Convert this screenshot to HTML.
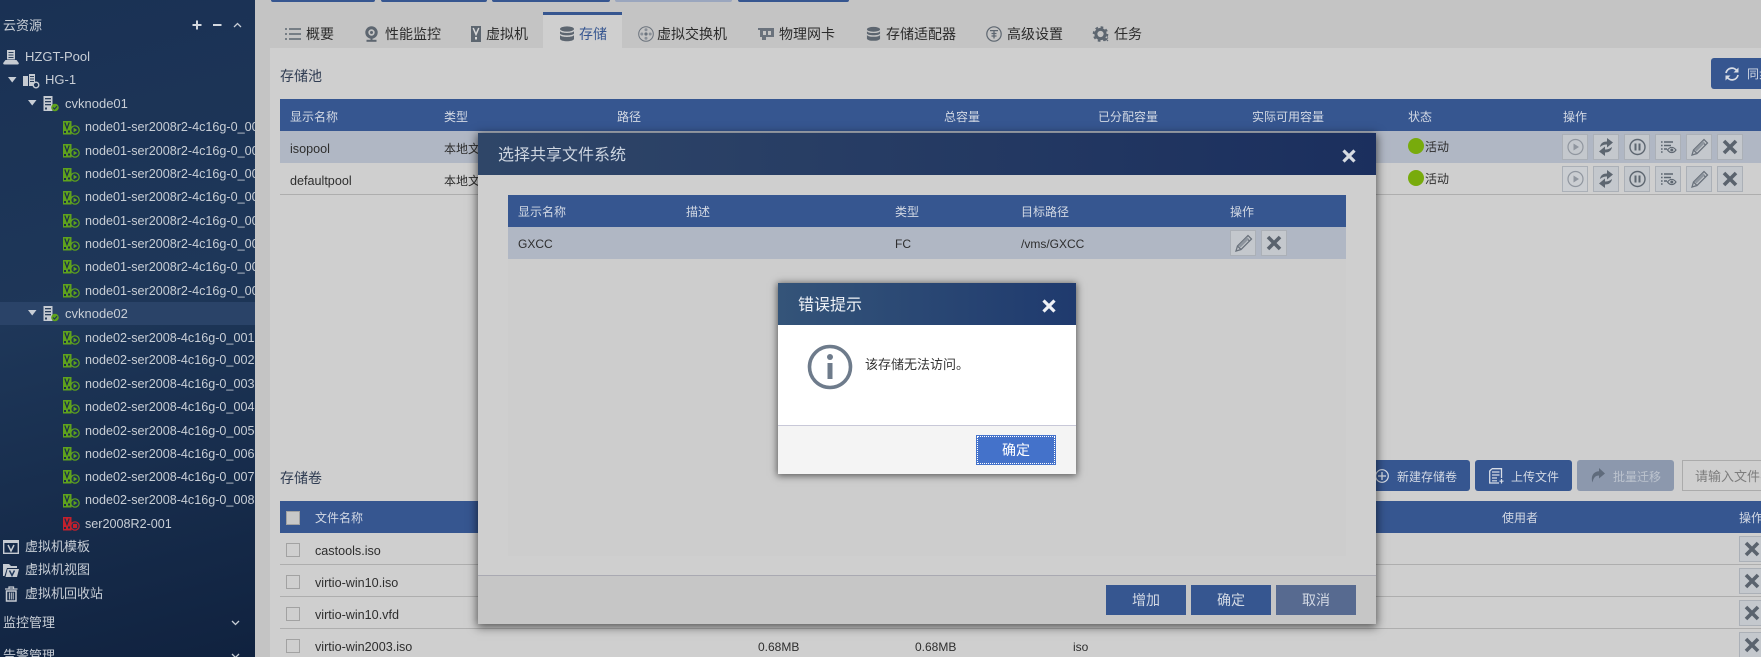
<!DOCTYPE html>
<html lang="zh">
<head>
<meta charset="utf-8">
<title>存储</title>
<style>
html,body{margin:0;padding:0;width:1761px;height:657px;overflow:hidden;background:#c4c4c4}
body{position:relative;font-family:"Liberation Sans","Noto Sans CJK SC",sans-serif;font-size:13px;color:#2e2e2e}
.a,.t{position:absolute}
.t{white-space:nowrap;line-height:20px;height:20px;margin-top:1px}
svg{position:absolute;overflow:visible}
#side{position:absolute;left:0;top:0;width:255px;height:657px;overflow:hidden;background:linear-gradient(165deg,#1a3154 0%,#1e3759 45%,#10223f 100%);color:#c8ced6}
#side .n{font-size:12.6px;left:85px}
.th{position:absolute;background:#365690}
.w{color:#d3d9e4;font-size:12px}
.top{position:absolute;top:0;height:2px;background:#365690;border-radius:0 0 3px 3px}
.tab{font-size:14px;top:24px;color:#2b2b2b;margin-top:0}
.b{position:absolute;width:26px;height:26px;box-sizing:border-box;border:1px solid #abb0b7;background:#c4c8cd}
.b svg{left:-1px;top:-1px}
.cb{position:absolute;width:14px;height:14px;box-sizing:border-box;border:1px solid #a2a2a2;background:#cfcfcf}
.line{position:absolute;height:1px;background:#aeaeae}
.btn{position:absolute;background:#365690;border-radius:3px}
.mb{position:absolute;top:585px;width:80px;height:30px;line-height:30px;text-align:center;font-size:14px;color:#d3d9e4;background:#365690}
.f{font-size:12.6px}
</style>
</head>
<body>
<svg width="0" height="0" style="position:absolute">
<defs>
<symbol id="vm" viewBox="0 0 17 14">
  <rect x="0" y="0" width="8.5" height="13.5" fill="#5fa31c"/>
  <path d="M1.8 1.5 L4 7.5 L6.2 1.5" fill="none" stroke="#1c2f4a" stroke-width="1.2"/>
  <rect x="1" y="10" width="2" height="2" fill="#1c2f4a"/><rect x="5" y="9.5" width="2" height="2" fill="#1c2f4a"/>
  <circle cx="12" cy="9" r="4.2" fill="#1c3354" stroke="#5fa31c" stroke-width="1.2"/>
  <path d="M10.6 6.8 L14.2 9 L10.6 11.2Z" fill="#5fa31c"/>
</symbol>
<symbol id="vmr" viewBox="0 0 17 14">
  <rect x="0" y="0" width="8.5" height="13.5" fill="#c4202c"/>
  <path d="M1.8 1.5 L4 7.5 L6.2 1.5" fill="none" stroke="#1c2f4a" stroke-width="1.2"/>
  <rect x="1" y="10" width="2" height="2" fill="#1c2f4a"/><rect x="5" y="9.5" width="2" height="2" fill="#1c2f4a"/>
  <circle cx="12" cy="9" r="4.2" fill="#1c3354" stroke="#c4202c" stroke-width="1.2"/>
  <rect x="10" y="7" width="4" height="4" fill="#c4202c"/>
</symbol>
<symbol id="host" viewBox="0 0 16 16">
  <rect x="0.5" y="0" width="9" height="15" fill="#c6cbd2"/>
  <rect x="2" y="2" width="6" height="1.3" fill="#2a3f5c"/><rect x="2" y="5" width="6" height="1.3" fill="#2a3f5c"/><rect x="2" y="8" width="6" height="1.3" fill="#2a3f5c"/>
  <rect x="2" y="11.5" width="2" height="2" fill="#2a3f5c"/>
  <circle cx="12" cy="11.5" r="3.8" fill="#5fa31c"/>
  <path d="M10 11.5 L11.5 13 L14 10.3" fill="none" stroke="#1c3354" stroke-width="1.1"/>
</symbol>
<symbol id="db" viewBox="0 0 16 16" >
  <ellipse cx="8" cy="3" rx="7" ry="2.6" fill="#5d6670"/>
  <path d="M1 5 C2 7.6 14 7.6 15 5 V7.5 C14 10 2 10 1 7.5Z" fill="#5d6670"/>
  <path d="M1 9 C2 11.6 14 11.6 15 9 V13 C14 16 2 16 1 13Z" fill="#5d6670"/>
</symbol>
<symbol id="bx" viewBox="0 0 26 26"><path d="M7 7 L19 19 M19 7 L7 19" stroke="#5a636e" stroke-width="3.6" fill="none"/></symbol>
<symbol id="bpen" viewBox="0 0 26 26"><path d="M6 21 L7.5 16 L18 5.5 L21.5 9 L11 19.5 Z M16 7.5 L19.5 11 M7.5 16 L11 19.5" fill="none" stroke="#6a727c" stroke-width="1.3"/><path d="M8.5 15.5 L17 7 L19 9 L10.5 17.5Z" fill="#8e959e"/></symbol>
<symbol id="bplay" viewBox="0 0 26 26"><circle cx="13.5" cy="13" r="7.5" fill="none" stroke="#90969f" stroke-width="1.2"/><path d="M11.5 9.5 L17 13 L11.5 16.5Z" fill="#90969f"/></symbol>
<symbol id="bsync" viewBox="0 0 26 26"><path d="M7 13 C7.5 9 10.5 7.5 14 7.5 V4 L20 8.5 L14 13.5 V10.5 C11.5 10.5 9.5 11 7 13Z M19 13 C18.5 17 15.5 18.5 12 18.5 V22 L6 17.5 L12 12.5 V15.5 C14.5 15.5 16.5 15 19 13Z" fill="#5d6670"/></symbol>
<symbol id="bpause" viewBox="0 0 26 26"><circle cx="13.5" cy="13" r="7.5" fill="none" stroke="#5d6670" stroke-width="1.4"/><rect x="10.5" y="9.5" width="2" height="7" fill="#5d6670"/><rect x="14.5" y="9.5" width="2" height="7" fill="#5d6670"/></symbol>
<symbol id="blist" viewBox="0 0 26 26"><path d="M6 8 H7.6 M9 8 H18 M6 11.5 H7.6 M9 11.5 H16 M6 15 H7.6 M9 15 H12 M6 18 H7.6" stroke="#5d6670" stroke-width="1.4" fill="none"/><path d="M12.5 16 C15 12.5 18.5 12.5 21 16 C18.5 19.5 15 19.5 12.5 16Z" fill="none" stroke="#5d6670" stroke-width="1.1"/><circle cx="16.8" cy="16" r="1.5" fill="#5d6670"/></symbol>
<symbol id="close" viewBox="0 0 14 14"><path d="M1.5 1.5 L12.5 12.5 M12.5 1.5 L1.5 12.5" stroke="currentColor" stroke-width="3.2" fill="none"/></symbol>
</defs>
</svg>

<div id="side">
  <span class="t" style="left:3px;top:15px;font-size:13px">云资源</span>
  <svg style="left:192px;top:20px" width="10" height="10"><path d="M0.5 5 H9.5 M5 0.5 V9.5" stroke="#d3d8df" stroke-width="2"/></svg>
  <svg style="left:212px;top:20px" width="10" height="10"><path d="M1 5 H9.5" stroke="#d3d8df" stroke-width="2"/></svg>
  <svg style="left:233px;top:22px" width="9" height="6"><path d="M1 5 L4.5 1.5 L8 5" stroke="#c8ced6" stroke-width="1.3" fill="none"/></svg>

  <svg style="left:3px;top:50px" width="16" height="15"><path d="M4 0 H12 V9.5 H4Z" fill="#c6cbd2"/><path d="M5.5 2.5 H10.5 M5.5 5 H10.5 M5.5 7.5 H10.5" stroke="#2a3f5c" stroke-width="1"/><path d="M2.5 10 H13.5 L15.8 13 Q16 14.5 14.5 14.5 H1.5 Q0 14.5 0.2 13Z" fill="#c6cbd2"/></svg>
  <span class="t" style="left:25px;top:46px">HZGT-Pool</span>

  <svg style="left:8px;top:77px" width="9" height="6"><path d="M0 0 H8.5 L4.2 5.5Z" fill="#c8ced6"/></svg>
  <svg style="left:23px;top:74px" width="17" height="15"><rect x="0" y="2" width="5" height="10" fill="#c6cbd2"/><rect x="6" y="0" width="6" height="12" fill="#c6cbd2"/><path d="M7 2.5 H11 M7 5 H11 M7 7.5 H11" stroke="#2a3f5c"/><circle cx="13" cy="11" r="2.8" fill="#1c3354" stroke="#c6cbd2" stroke-width="1.4"/></svg>
  <span class="t" style="left:45px;top:69px">HG-1</span>

  <svg style="left:28px;top:100px" width="9" height="6"><path d="M0 0 H8.5 L4.2 5.5Z" fill="#c8ced6"/></svg>
  <svg style="left:43px;top:96px" width="16" height="16"><use href="#host"/></svg>
  <span class="t" style="left:65px;top:93px">cvknode01</span>

  <svg style="left:63px;top:121px" width="17" height="14"><use href="#vm"/></svg><span class="t n" style="top:116px">node01-ser2008r2-4c16g-0_001</span>
  <svg style="left:63px;top:144px" width="17" height="14"><use href="#vm"/></svg><span class="t n" style="top:140px">node01-ser2008r2-4c16g-0_002</span>
  <svg style="left:63px;top:168px" width="17" height="14"><use href="#vm"/></svg><span class="t n" style="top:163px">node01-ser2008r2-4c16g-0_003</span>
  <svg style="left:63px;top:191px" width="17" height="14"><use href="#vm"/></svg><span class="t n" style="top:186px">node01-ser2008r2-4c16g-0_004</span>
  <svg style="left:63px;top:214px" width="17" height="14"><use href="#vm"/></svg><span class="t n" style="top:210px">node01-ser2008r2-4c16g-0_005</span>
  <svg style="left:63px;top:237px" width="17" height="14"><use href="#vm"/></svg><span class="t n" style="top:233px">node01-ser2008r2-4c16g-0_006</span>
  <svg style="left:63px;top:260px" width="17" height="14"><use href="#vm"/></svg><span class="t n" style="top:256px">node01-ser2008r2-4c16g-0_007</span>
  <svg style="left:63px;top:284px" width="17" height="14"><use href="#vm"/></svg><span class="t n" style="top:280px">node01-ser2008r2-4c16g-0_008</span>

  <div class="a" style="left:0;top:302px;width:255px;height:23px;background:#2a4368"></div>
  <svg style="left:28px;top:310px" width="9" height="6"><path d="M0 0 H8.5 L4.2 5.5Z" fill="#c8ced6"/></svg>
  <svg style="left:43px;top:306px" width="16" height="16"><use href="#host"/></svg>
  <span class="t" style="left:65px;top:303px">cvknode02</span>

  <svg style="left:63px;top:331px" width="17" height="14"><use href="#vm"/></svg><span class="t n" style="top:327px">node02-ser2008-4c16g-0_001</span>
  <svg style="left:63px;top:354px" width="17" height="14"><use href="#vm"/></svg><span class="t n" style="top:349px">node02-ser2008-4c16g-0_002</span>
  <svg style="left:63px;top:377px" width="17" height="14"><use href="#vm"/></svg><span class="t n" style="top:373px">node02-ser2008-4c16g-0_003</span>
  <svg style="left:63px;top:400px" width="17" height="14"><use href="#vm"/></svg><span class="t n" style="top:396px">node02-ser2008-4c16g-0_004</span>
  <svg style="left:63px;top:424px" width="17" height="14"><use href="#vm"/></svg><span class="t n" style="top:420px">node02-ser2008-4c16g-0_005</span>
  <svg style="left:63px;top:447px" width="17" height="14"><use href="#vm"/></svg><span class="t n" style="top:443px">node02-ser2008-4c16g-0_006</span>
  <svg style="left:63px;top:470px" width="17" height="14"><use href="#vm"/></svg><span class="t n" style="top:466px">node02-ser2008-4c16g-0_007</span>
  <svg style="left:63px;top:494px" width="17" height="14"><use href="#vm"/></svg><span class="t n" style="top:489px">node02-ser2008-4c16g-0_008</span>
  <svg style="left:63px;top:517px" width="17" height="14"><use href="#vmr"/></svg><span class="t n" style="top:513px">ser2008R2-001</span>

  <svg style="left:3px;top:540px" width="16" height="14"><rect x="0.7" y="0.7" width="14.6" height="12.6" fill="none" stroke="#c6cbd2" stroke-width="1.4"/><rect x="0" y="0" width="16" height="3" fill="#c6cbd2"/><path d="M5 5 L8 11 L11 5" fill="none" stroke="#c6cbd2" stroke-width="1.5"/></svg>
  <span class="t" style="left:25px;top:536px">虚拟机模板</span>
  <svg style="left:3px;top:563px" width="16" height="14"><path d="M0 1 H6 L8 3 H14 V5 H4 L1.5 13 H0Z" fill="#c6cbd2"/><path d="M4.5 6 H16 L14 14 H2.5Z" fill="#c6cbd2"/><path d="M6.5 7.5 L9 12.5 L11.5 7.5" fill="none" stroke="#1e3759" stroke-width="1.4"/></svg>
  <span class="t" style="left:25px;top:559px">虚拟机视图</span>
  <svg style="left:5px;top:586px" width="13" height="16"><path d="M0 3 H12.5 M4 3 V1 H8.5 V3" fill="none" stroke="#c6cbd2" stroke-width="1.3"/><path d="M1.5 5 H11 V15 H1.5Z" fill="none" stroke="#c6cbd2" stroke-width="1.5"/><path d="M4.4 6.5 V13.5 M6.3 6.5 V13.5 M8.2 6.5 V13.5" stroke="#c6cbd2" stroke-width="1"/></svg>
  <span class="t" style="left:25px;top:583px">虚拟机回收站</span>

  <span class="t" style="left:3px;top:612px">监控管理</span>
  <svg style="left:231px;top:620px" width="9" height="6"><path d="M1 1 L4.5 4.5 L8 1" stroke="#c8ced6" stroke-width="1.3" fill="none"/></svg>
  <span class="t" style="left:3px;top:645px">告警管理</span>
  <svg style="left:231px;top:653px" width="9" height="6"><path d="M1 1 L4.5 4.5 L8 1" stroke="#c8ced6" stroke-width="1.3" fill="none"/></svg>
</div>

<!-- top bars -->
<div class="top" style="left:271px;width:104px"></div>
<div class="top" style="left:381px;width:106px"></div>
<div class="top" style="left:492px;width:118px"></div>
<div class="top" style="left:615px;width:117px;background:#9aa6be"></div>
<div class="top" style="left:738px;width:111px"></div>

<!-- panel -->
<div class="a" style="left:270px;top:48px;width:1491px;height:609px;background:#cfcfcf"></div>

<!-- tabs -->
<div class="a" style="left:543px;top:12px;width:79px;height:36px;background:#cfcfcf;border-top:3px solid #365690;box-sizing:border-box"></div>
<svg style="left:285px;top:27px" width="16" height="14"><path d="M0 2 H2 M4 2 H16 M0 7 H2 M4 7 H16 M0 12 H2 M4 12 H16" stroke="#5d6670" stroke-width="1.5"/></svg>
<span class="t tab" style="left:306px">概要</span>
<svg style="left:365px;top:26px" width="13" height="16"><circle cx="6.5" cy="6.5" r="6.2" fill="#5d6670"/><circle cx="6.5" cy="6.5" r="3.2" fill="#c4c4c4"/><circle cx="6.5" cy="6.5" r="1.5" fill="#5d6670"/><path d="M1.5 14.8 H11.5" stroke="#5d6670" stroke-width="2"/><path d="M6.5 12 V15" stroke="#5d6670" stroke-width="2"/></svg>
<span class="t tab" style="left:385px">性能监控</span>
<svg style="left:471px;top:26px" width="10" height="16"><rect width="10" height="16" fill="#5d6670"/><path d="M2.2 2 L5 8.5 L7.8 2" fill="none" stroke="#d8d8d8" stroke-width="1.5"/><rect x="4" y="11" width="2" height="2.5" fill="#d8d8d8"/></svg>
<span class="t tab" style="left:486px">虚拟机</span>
<svg style="left:559px;top:26px" width="16" height="16"><use href="#db"/></svg>
<span class="t tab" style="left:579px;color:#365690">存储</span>
<svg style="left:638px;top:26px" width="16" height="16"><circle cx="8" cy="8" r="7.3" fill="none" stroke="#6a727c" stroke-width="1"/><circle cx="8" cy="8" r="1.6" fill="#6a727c"/><circle cx="8" cy="3.8" r="1.5" fill="#8a9098"/><circle cx="8" cy="12.2" r="1.5" fill="#8a9098"/><circle cx="3.8" cy="8" r="1.5" fill="#8a9098"/><circle cx="12.2" cy="8" r="1.5" fill="#8a9098"/></svg>
<span class="t tab" style="left:657px">虚拟交换机</span>
<svg style="left:758px;top:28px" width="16" height="13"><path d="M0 0 H16 V9 H8 V12 H4 V9 H2 V2 H0Z" fill="#6a727c"/><rect x="5" y="3" width="3" height="4" fill="#c4c4c4"/><rect x="10" y="3" width="3" height="4" fill="#c4c4c4"/></svg>
<span class="t tab" style="left:779px">物理网卡</span>
<svg style="left:866px;top:26px" width="15" height="16"><use href="#db"/></svg>
<span class="t tab" style="left:886px">存储适配器</span>
<svg style="left:986px;top:26px" width="16" height="16"><circle cx="8" cy="8" r="7.2" fill="none" stroke="#5d6670" stroke-width="1.2"/><path d="M4 4.6 H12 M5.5 7.5 H10.5 M8 4.6 V12.5 M5.5 10 H10.5" stroke="#5d6670" stroke-width="1.3"/></svg>
<span class="t tab" style="left:1007px">高级设置</span>
<svg style="left:1093px;top:26px" width="16" height="16"><circle cx="7.5" cy="8" r="4.6" fill="none" stroke="#5d6670" stroke-width="3"/><circle cx="7.5" cy="8" r="6.9" fill="none" stroke="#5d6670" stroke-width="1.8" stroke-dasharray="2.7 2.7"/><path d="M11.5 11.5 L15 15 M15 11.5 L11.5 15" stroke="#5d6670" stroke-width="1.2"/></svg>
<span class="t tab" style="left:1114px">任务</span>

<!-- storage pool -->
<span class="t" style="left:280px;top:65px;font-size:14px;color:#2f3c52">存储池</span>
<div class="btn" style="left:1711px;top:58px;width:60px;height:31px"></div>
<svg style="left:1724px;top:66px" width="16" height="16"><path d="M2 7 A6 6 0 0 1 13 5 M14 9 A6 6 0 0 1 3 11" fill="none" stroke="#d8dde6" stroke-width="1.7"/><path d="M14.5 1.5 V6.5 H9.5Z M1.5 14.5 V9.5 H6.5Z" fill="#d8dde6"/></svg>
<span class="t" style="left:1747px;top:63px;font-size:12px;color:#d3d9e4">同步</span>

<div class="th" style="left:280px;top:99px;width:1481px;height:32px"></div>
<span class="t w" style="left:290px;top:106px">显示名称</span>
<span class="t w" style="left:444px;top:106px">类型</span>
<span class="t w" style="left:617px;top:106px">路径</span>
<span class="t w" style="left:944px;top:106px">总容量</span>
<span class="t w" style="left:1098px;top:106px">已分配容量</span>
<span class="t w" style="left:1252px;top:106px">实际可用容量</span>
<span class="t w" style="left:1408px;top:106px">状态</span>
<span class="t w" style="left:1563px;top:106px">操作</span>

<div class="a" style="left:280px;top:131px;width:1481px;height:32px;background:#b0b7c4"></div>
<div class="line" style="left:280px;top:194px;width:1481px"></div>
<span class="t" style="left:290px;top:138px;font-size:12.6px">isopool</span>
<span class="t" style="left:290px;top:170px;font-size:12.6px">defaultpool</span>
<span class="t" style="left:444px;top:138px;font-size:12px">本地文件目录</span>
<span class="t" style="left:444px;top:170px;font-size:12px">本地文件目录</span>
<div class="a" style="left:1408px;top:138px;width:16px;height:16px;border-radius:50%;background:#78ab0c"></div>
<span class="t" style="left:1425px;top:136px;font-size:12px">活动</span>
<div class="a" style="left:1408px;top:170px;width:16px;height:16px;border-radius:50%;background:#78ab0c"></div>
<span class="t" style="left:1425px;top:168px;font-size:12px">活动</span>

<div class="b" style="left:1562px;top:134px"><svg width="26" height="26"><use href="#bplay"/></svg></div>
<div class="b" style="left:1593px;top:134px"><svg width="26" height="26"><use href="#bsync"/></svg></div>
<div class="b" style="left:1624px;top:134px"><svg width="26" height="26"><use href="#bpause"/></svg></div>
<div class="b" style="left:1655px;top:134px"><svg width="26" height="26"><use href="#blist"/></svg></div>
<div class="b" style="left:1686px;top:134px"><svg width="26" height="26"><use href="#bpen"/></svg></div>
<div class="b" style="left:1717px;top:134px"><svg width="26" height="26"><use href="#bx"/></svg></div>
<div class="b" style="left:1562px;top:166px;background:#cbced2"><svg width="26" height="26"><use href="#bplay"/></svg></div>
<div class="b" style="left:1593px;top:166px"><svg width="26" height="26"><use href="#bsync"/></svg></div>
<div class="b" style="left:1624px;top:166px"><svg width="26" height="26"><use href="#bpause"/></svg></div>
<div class="b" style="left:1655px;top:166px"><svg width="26" height="26"><use href="#blist"/></svg></div>
<div class="b" style="left:1686px;top:166px"><svg width="26" height="26"><use href="#bpen"/></svg></div>
<div class="b" style="left:1717px;top:166px"><svg width="26" height="26"><use href="#bx"/></svg></div>

<!-- volumes -->
<span class="t" style="left:280px;top:467px;font-size:14px;color:#2f3c52">存储卷</span>
<div class="btn" style="left:1360px;top:460px;width:110px;height:31px"></div>
<svg style="left:1375px;top:469px" width="15" height="15"><circle cx="7" cy="7" r="6.3" fill="none" stroke="#d8dde6" stroke-width="1.2"/><path d="M3 7 H11 M7 3 V11" stroke="#d8dde6" stroke-width="1.3"/></svg>
<span class="t w" style="left:1397px;top:466px">新建存储卷</span>
<div class="btn" style="left:1475px;top:460px;width:97px;height:31px"></div>
<svg style="left:1489px;top:468px" width="15" height="16"><path d="M3 .7 H12.5 V10 M3 .7 L.7 3 V15 H10" fill="none" stroke="#d8dde6" stroke-width="1.3"/><path d="M3 4 H10.5 M3 7 H10.5 M3 10 H8 M3 12.8 H8" stroke="#d8dde6" stroke-width="1.2"/><path d="M12.5 11 V15.5 M10.5 13.2 H14.5" stroke="#d8dde6" stroke-width="1.2"/></svg>
<span class="t w" style="left:1511px;top:466px">上传文件</span>
<div class="btn" style="left:1577px;top:460px;width:97px;height:31px;background:#8c98ad"></div>
<svg style="left:1591px;top:468px" width="14" height="15"><path d="M8 0 L14 5.5 L8 10.5 V7.5 C4.5 7.5 2.5 9.5 1.5 14.5 C-0.5 8 2.5 3.5 8 3.2Z" fill="#5f6b7c"/></svg>
<span class="t w" style="left:1613px;top:466px;color:#bcc3ce">批量迁移</span>
<div class="a" style="left:1682px;top:460px;width:100px;height:31px;box-sizing:border-box;border:1px solid #ababab;background:#cfcfcf"></div>
<span class="t" style="left:1695px;top:466px;color:#7d7d7d">请输入文件名</span>

<div class="th" style="left:280px;top:501px;width:1481px;height:32px"></div>
<div class="cb" style="left:286px;top:511px;background:#c8c8c8"></div>
<span class="t w" style="left:315px;top:507px">文件名称</span>
<span class="t w" style="left:1502px;top:507px">使用者</span>
<span class="t w" style="left:1739px;top:507px">操作</span>

<div class="line" style="left:280px;top:564px;width:1481px"></div>
<div class="line" style="left:280px;top:596px;width:1481px"></div>
<div class="line" style="left:280px;top:628px;width:1481px"></div>
<div class="cb" style="left:286px;top:543px"></div>
<div class="cb" style="left:286px;top:575px"></div>
<div class="cb" style="left:286px;top:607px"></div>
<div class="cb" style="left:286px;top:639px"></div>
<span class="t f" style="left:315px;top:540px">castools.iso</span>
<span class="t f" style="left:315px;top:572px">virtio-win10.iso</span>
<span class="t f" style="left:315px;top:604px">virtio-win10.vfd</span>
<span class="t f" style="left:315px;top:636px">virtio-win2003.iso</span>
<span class="t" style="left:758px;top:636px;font-size:12px">0.68MB</span>
<span class="t" style="left:915px;top:636px;font-size:12px">0.68MB</span>
<span class="t" style="left:1073px;top:636px;font-size:12px">iso</span>
<div class="b" style="left:1739px;top:536px"><svg width="26" height="26"><use href="#bx"/></svg></div>
<div class="b" style="left:1739px;top:568px"><svg width="26" height="26"><use href="#bx"/></svg></div>
<div class="b" style="left:1739px;top:600px"><svg width="26" height="26"><use href="#bx"/></svg></div>
<div class="b" style="left:1739px;top:632px"><svg width="26" height="26"><use href="#bx"/></svg></div>

<!-- modal 1 -->
<div class="a" style="left:478px;top:133px;width:898px;height:491px;background:#cfcfcf;box-shadow:0 2px 9px 1px rgba(0,0,0,.6)"></div>
<div class="a" style="left:478px;top:133px;width:898px;height:42px;background:linear-gradient(90deg,#2f4668,#1b2f5e)"></div>
<span class="t" style="left:498px;top:145px;font-size:16px;color:#cdd5e0">选择共享文件系统</span>
<svg style="left:1342px;top:149px;color:#d6dbe2" width="14" height="14"><use href="#close"/></svg>
<div class="th" style="left:508px;top:195px;width:838px;height:32px"></div>
<div class="a" style="left:508px;top:227px;width:838px;height:32px;background:#b0b7c4"></div>
<div class="a" style="left:508px;top:259px;width:838px;height:297px;background:#cdcdcd"></div>
<span class="t w" style="left:518px;top:201px">显示名称</span>
<span class="t w" style="left:686px;top:201px">描述</span>
<span class="t w" style="left:895px;top:201px">类型</span>
<span class="t w" style="left:1021px;top:201px">目标路径</span>
<span class="t w" style="left:1230px;top:201px">操作</span>
<span class="t" style="left:518px;top:233px;font-size:12px">GXCC</span>
<span class="t" style="left:895px;top:233px;font-size:12px">FC</span>
<span class="t" style="left:1021px;top:233px;font-size:12px">/vms/GXCC</span>
<div class="b" style="left:1230px;top:230px;background:#c4c8cd"><svg width="26" height="26"><use href="#bpen"/></svg></div>
<div class="b" style="left:1261px;top:230px"><svg width="26" height="26"><use href="#bx"/></svg></div>
<div class="a" style="left:478px;top:575px;width:898px;height:49px;background:#c6c6c6;border-top:1px solid #a9a9b2;box-sizing:border-box"></div>
<div class="mb" style="left:1106px">增加</div>
<div class="mb" style="left:1191px">确定</div>
<div class="mb" style="left:1276px;background:#576a90">取消</div>

<!-- error dialog -->
<div class="a" style="left:778px;top:283px;width:298px;height:191px;background:#fff;box-shadow:0 1px 7px 1px rgba(0,0,0,.55)"></div>
<div class="a" style="left:778px;top:283px;width:298px;height:42px;background:linear-gradient(90deg,#345479,#1f3a6e)"></div>
<span class="t" style="left:798px;top:295px;font-size:16px;color:#eef2f7">错误提示</span>
<svg style="left:1042px;top:299px;color:#eef1f6" width="14" height="14"><use href="#close"/></svg>
<svg style="left:808px;top:345px" width="44" height="44"><circle cx="22" cy="22" r="20.5" fill="none" stroke="#6e7b8b" stroke-width="3.6"/><circle cx="22" cy="12" r="3" fill="#6e7b8b"/><rect x="19.5" y="18" width="5" height="16" fill="#6e7b8b"/></svg>
<span class="t" style="left:865px;top:354px;font-size:13px;color:#333">该存储无法访问。</span>
<div class="a" style="left:778px;top:425px;width:298px;height:49px;background:#f4f4f4;border-top:1px solid #c8c8d8;box-sizing:border-box"></div>
<div class="a" style="left:976px;top:435px;width:80px;height:30px;background:#4472ca;line-height:30px;text-align:center;font-size:14px;color:#fff;outline:1px dotted #fff;outline-offset:-2px">确定</div>
</body>
</html>
